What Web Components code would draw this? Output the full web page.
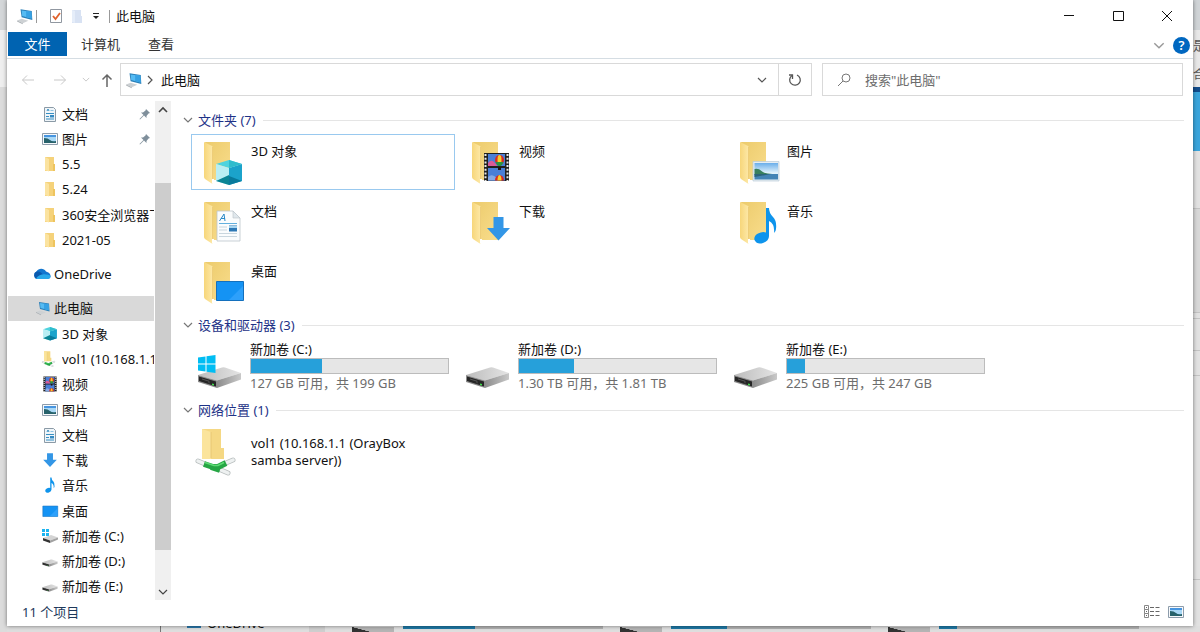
<!DOCTYPE html>
<html lang="zh-CN">
<head>
<meta charset="utf-8">
<meta name="viewport" content="width=device-width, initial-scale=1">
<title>此电脑</title>
<style>
  html, body { margin: 0; height: 100%; }
  body {
    font: 13px/18px "Noto Sans", "Noto Sans CJK SC", sans-serif;
    color: #111;
    --line: #d9d9d9;
    --accent: #0063b1;
    --fill: #26a0da;
    --group: #1e3287;
  }
</style>
</head>
<body>
<desktop-area>
  <back-windows slot="behind"></back-windows>
  <explorer-window>
    <window-caption slot="caption">此电脑</window-caption>
    <ribbon-tabs slot="ribbon"></ribbon-tabs>
    <address-bar slot="address" place="此电脑"></address-bar>
    <nav-pane slot="nav">
      <nav-item icon="doc" pinned>文档</nav-item>
      <nav-item icon="picture" pinned>图片</nav-item>
      <nav-item icon="folder">5.5</nav-item>
      <nav-item icon="folder">5.24</nav-item>
      <nav-item icon="folder">360安全浏览器下载</nav-item>
      <nav-item icon="folder">2021-05</nav-item>
      <nav-item icon="cloud" root>OneDrive</nav-item>
      <nav-item icon="pc" root selected>此电脑</nav-item>
      <nav-item icon="cube">3D 对象</nav-item>
      <nav-item icon="net">vol1 (10.168.1.1 (OrayBox samba server))</nav-item>
      <nav-item icon="video">视频</nav-item>
      <nav-item icon="picture">图片</nav-item>
      <nav-item icon="doc">文档</nav-item>
      <nav-item icon="download">下载</nav-item>
      <nav-item icon="music">音乐</nav-item>
      <nav-item icon="desktop">桌面</nav-item>
      <nav-item icon="driveC">新加卷 (C:)</nav-item>
      <nav-item icon="drive">新加卷 (D:)</nav-item>
      <nav-item icon="drive">新加卷 (E:)</nav-item>
    </nav-pane>
    <file-group label="文件夹 (7)">
      <file-tile icon="bigCube" focused>3D 对象</file-tile>
      <file-tile icon="bigVideo">视频</file-tile>
      <file-tile icon="bigPicture">图片</file-tile>
      <file-tile icon="bigDoc">文档</file-tile>
      <file-tile icon="bigDownload">下载</file-tile>
      <file-tile icon="bigMusic">音乐</file-tile>
      <file-tile icon="bigDesktop">桌面</file-tile>
    </file-group>
    <file-group label="设备和驱动器 (3)">
      <drive-tile icon="bigDriveC" used="36" info="127 GB 可用，共 199 GB">新加卷 (C:)</drive-tile>
      <drive-tile icon="bigDrive" used="28" info="1.30 TB 可用，共 1.81 TB">新加卷 (D:)</drive-tile>
      <drive-tile icon="bigDrive" used="9" info="225 GB 可用，共 247 GB">新加卷 (E:)</drive-tile>
    </file-group>
    <file-group label="网络位置 (1)">
      <file-tile icon="bigNet" centered>vol1 (10.168.1.1 (OrayBox samba server))</file-tile>
    </file-group>
    <status-bar slot="status">11 个项目</status-bar>
  </explorer-window>
</desktop-area>

<script>
const folderShape = `
  <defs>
    <linearGradient id="back" x1="0" x2="1" y2="1"><stop offset="0" stop-color="#eccb6c"/><stop offset="1" stop-color="#f9dd8c"/></linearGradient>
    <linearGradient id="flap" x2="1"><stop offset="0" stop-color="#f7d67a"/><stop offset="1" stop-color="#fde9a9"/></linearGradient>
  </defs>
  <path d="M6 4H31V42H12z" fill="url(#back)"/>
  <path d="M5 4L13 8Q14 9 14 10V45Q14 46 12 45L6 41Q5 40 5 39z" fill="url(#flap)"/>
  <path d="M13.500 9V42" stroke="#e6c266" stroke-width=".7"/>
  <path d="M13 41l2 0v3l-2 2z" fill="#fff"/>`;

const driveShape = `
  <defs>
    <linearGradient id="top" x2="1"><stop offset="0" stop-color="#bcbcbc"/><stop offset="1" stop-color="#e4e4e4"/></linearGradient>
    <linearGradient id="side" x2="1"><stop offset="0" stop-color="#8c8c8c"/><stop offset="1" stop-color="#c9c9c9"/></linearGradient>
  </defs>
  <path d="M0 33L24 25.500Q25 25 27 25.500L43 31L19 38.500z" fill="url(#top)"/>
  <path d="M19 38.500L43 31V37.500L19 46z" fill="url(#side)"/>
  <path d="M0 33L19 38.500V46L0 40z" fill="#8b8b8b"/>
  <path d="M1 34.500L18 39.500V44.500L1 39z" fill="#262626"/>
  <path d="M4 37l7 2.200v2.200" stroke="#555" fill="none"/>
  <path d="M14 41.500l2 .6v1.500l-2-.6z" fill="#3fe04b"/>`;

const cubeShape = `
  <path d="M17 26L30 22L43 26L30 30z" fill="#4fd3de"/>
  <path d="M17 26L30 30V47L17 43z" fill="#b9eef3"/>
  <path d="M43 26L30 30V47L43 43z" fill="#1ba3cb"/>
  <path d="M30 22l13 4-13 4z" fill="#2fbccd"/>
  <path d="M17 43L30 37V47z" fill="#0a8595"/>
  <path d="M30 38L43 43 30 47z" fill="#087a9c"/>`;

const videoShape = `
  <path d="M17 15H42V43H17z" fill="#20201f"/>
  <path d="M18.500 16v27M40.500 16v27" stroke="#e8e8e8" stroke-width="2" stroke-dasharray="2 1.700"/>
  <path d="M21 16H38V28H21zM21 30H38V42.500H21z" fill="#4a7fd6"/>
  <path d="M21 25q3-4 6-1t3 4h-9z" fill="#d95a98"/>
  <path d="M21 39q3-3 6-1t4 2v2.500H21z" fill="#86a9e4"/>
  <ellipse cx="32.500" cy="22" rx="4.500" ry="5" fill="#d92b20"/>
  <ellipse cx="32.500" cy="22" rx="2" ry="5" fill="#f6cf2c"/>
  <path d="M28.500 24h8q-1 3-3 4h-2q-2-1-3-4z" fill="#2b9440"/>
  <path d="M31 29h3v3h-3z" fill="#20160f"/>
  <path d="M28 42.500a4.500 5.500 0 0 1 9 0z" fill="#d92b20"/>
  <path d="M30.500 42.500q0-5 2-5.500 2 .5 2 5.500z" fill="#f6cf2c"/>`;

const pictureShape = `
  <defs><linearGradient id="sky" x2="0" y2="1"><stop offset="0" stop-color="#6aaeea"/><stop offset=".6" stop-color="#e2f2fb"/></linearGradient></defs>
  <path d="M18 23.500H44V43H18z" fill="#e6edf2" stroke="#b9cbd8" stroke-width=".7"/>
  <path d="M19.500 25H43V41.500H19.500z" fill="url(#sky)"/>
  <path d="M19.500 31q4-1 7 2t16.500 3v1H19.500z" fill="#39805e"/>
  <path d="M19.500 36H43V41.500H19.500z" fill="#4484b5"/>
  <path d="M19.500 36H36l-16.500 3z" fill="#2c6478"/>`;

const docShape = `
  <path d="M18 13H34L41 20V43H18z" fill="#fafcfd" stroke="#bcc5cb" stroke-width=".8"/>
  <path d="M34 13V20H41z" fill="#dfe7ec" stroke="#bcc5cb" stroke-width=".6"/>
  <path d="M20.500 23l4.500-7 1 7M22 20.500h4" stroke="#2989c8" fill="none"/>
  <path d="M20 25.500H38" stroke="#62b0de"/>
  <path d="M30 27.500h8v6h-8z" fill="#2d78b5"/><path d="M30 28h8v2h-8z" fill="#a5d5f1"/>
  <path d="M20 29h8M20 32h8M20 35.500h18M20 38.500h18" stroke="#c9d6de"/>`;

const arrowShape = `<path d="M26.500 19H36.500V30H43L31.500 42.500L20 30H26.500z" fill="#3396e6"/>`;
const noteShape = `<path d="M31 10h3q0 5 4 9t3 12q0 2-2 4 1-9-5-12V38q0 5-6 7t-8.500-3q-1-4 3.500-6.500t8-1z" fill="#0e94ec"/>`;
const screenShape = `
  <path d="M17.500 23.500H44.500V42.500H17.500z" fill="#1493f4" stroke="#1470bd"/>
  <path d="M30 42L44 28V42z" fill="#2da0fb"/>`;
const logoShape = `<path d="M0 15.500L7.500 14.500V21.500H0zM8.500 14.300L17.500 13V21.500H8.500zM0 22.500H7.500V29.500L0 28.500zM8.500 22.500H17.500V31L8.500 29.700z" fill="#00bdf3"/>`;

const netShape = `
  <path d="M3 1H22V20H25V31H3z" fill="#f5d884"/>
  <path d="M3 1L12 4V31H3z" fill="#fbe49c"/>
  <path d="M12 4V30" stroke="#e2c06a" stroke-width=".7"/>
  <path d="M-1 33l7 3M34 32l-7 3M22 42l7 3" stroke="#b9bfbf" stroke-width="5" stroke-linecap="round"/>
  <path d="M-1 33l7 3M34 32l-7 3M22 42l7 3" stroke="#eef1f1" stroke-width="3.500" stroke-linecap="round"/>
  <path d="M5 36l9 3h5l8-4M12 39l9 3" stroke="#26a644" stroke-width="6" fill="none" stroke-linejoin="round"/>
  <path d="M6 34.500l9 3h4l6-3" stroke="#5fdb74" stroke-width="1.500" fill="none"/>`;

// [viewBox, markup]
const ICONS = {
  bigCube: ['0 0 48 48', folderShape + cubeShape],
  bigVideo: ['0 0 48 48', folderShape + videoShape],
  bigPicture: ['0 0 48 48', folderShape + pictureShape],
  bigDoc: ['0 0 48 48', folderShape + docShape],
  bigDownload: ['0 0 48 48', folderShape + arrowShape],
  bigMusic: ['0 0 48 48', folderShape + noteShape],
  bigDesktop: ['0 0 48 48', folderShape + screenShape],
  bigDrive: ['0 0 48 48', driveShape],
  bigDriveC: ['0 0 48 48', driveShape + logoShape],
  bigNet: ['0 0 48 48', netShape],
  cube: ['15 20 30 30', cubeShape],
  video: ['15 14 29 30', videoShape],
  desktop: ['16 18 29 29', screenShape],
  download: ['18 17 27 27', arrowShape],
  music: ['12 9 37 37', noteShape],
  drive: ['-1 7 45 45', driveShape],
  net: ['-3 0 48 48', netShape],
  driveC: ['0 0 16 16', `
    <path d="M0 1h3v3H0zM4 1h3v3H4zM0 5h3v3H0zM4 5h3v3H4z" fill="#1cb4f0"/>
    <path d="M1 10l8-3 7 2.500-8 3z" fill="#d4d4d4"/><path d="M8 12.500l8-3v2L8 15z" fill="#a2a2a2"/>
    <path d="M1 10l7 2.500V15l-7-2.500z" fill="#333"/>`],
  folder: ['0 0 16 16', `
    <path d="M3 1h9v8h1v6H3z" fill="#f5d27a"/><path d="M3 1l4 2v12.500L3 14z" fill="#fbe3a0"/>
    <path d="M11 8h2v7h-2z" fill="#eec45e"/>`],
  picture: ['0 0 16 16', `
    <path d="M.5 2.500h15v11H.5z" fill="#f7f9fb" stroke="#8d9cab"/>
    <path d="M2 4h12v8H2z" fill="#a9d8f6"/><path d="M2 4h12v2H2z" fill="#4795e0"/>
    <path d="M2 7q4 0 6 2t6 1v2H2z" fill="#27626b"/>`],
  doc: ['0 0 16 16', `
    <path d="M2.500 1.500h9l2 2v12h-11z" fill="#eff5f9" stroke="#8b9aa6"/>
    <path d="M5 5l1-2 1 2M4 7.500h8M4 10.500h3M4 13h8" stroke="#368fc3" fill="none"/>
    <path d="M8 9h4v2.500H8z" fill="#348ac2"/><path d="M8.500 4.500h3" stroke="#8fc4e2"/>`],
  cloud: ['0 0 18 12', `
    <path d="M4 11a4 4 0 0 1-.5-7.500A5.500 5.500 0 0 1 13 3.500q4 1 4.500 4t-3 3.500z" fill="#1276cf"/>
    <path d="M4 11a4 4 0 0 1-.5-7.500Q6 3 8 4.500l6 6.500z" fill="#0a59ae"/>
    <path d="M3 10.500q4-5 10-4 5 0 4.500 2.500-.5 2-3 2H4z" fill="#28a8ea"/>`],
  pc: ['0 0 16 16', `
    <path d="M4 2l10 1.500.5 8L5 9z" fill="#2a7fb8"/><path d="M5 3l8.500 1.300.3 6L5.500 8z" fill="#55bbf3"/>
    <path d="M9 3.600l4.500.7.3 6-4.800-1.400z" fill="#36a1e4"/>
    <path d="M1 12l4-1.500 6 1.800L6 14.500z" fill="#cdd1d4"/><path d="M1 12l5 2.500v.8l-5-2.500z" fill="#a7adb1"/>`],
  pin: ['0 0 12 12', `<path d="M7 1l4 4-1.500.5L7.500 8v2L5 7.500 1 11.500.5 11l4-4L2 4.500h2L6.500 2.500z" fill="#7f8f9b"/>`],
  check: ['0 0 14 16', `
    <path d="M1.500 1.500h11v13h-11z" fill="#fff" stroke="#9097a0"/><path d="M4 8l2.500 3L11 5" fill="none" stroke="#e0622c" stroke-width="1.800"/>`],
  newFolder: ['0 0 12 16', `<path d="M1 2h9v6h1v7H1z" fill="#d8e2f3"/><path d="M1 2l3 1v12l-3-1z" fill="#e5edf9"/>`],
  menu: ['0 0 8 8', `<path d="M1 1.500h6" stroke="#222"/><path d="M1 4h6L4 7z" fill="#222"/>`],
  minimize: ['0 0 12 12', `<path d="M1 5.500h10" stroke="#111"/>`],
  maximize: ['0 0 12 12', `<path d="M1.500 1.500h10v9h-10z" fill="none" stroke="#111"/>`],
  close: ['0 0 12 12', `<path d="M1 1l10 10M11 1L1 11" stroke="#111"/>`],
  back: ['0 0 14 12', `<path d="M13 6H1.500M6 1.500L1.500 6 6 10.500" fill="none" stroke="currentColor"/>`],
  forward: ['0 0 14 12', `<path d="M1 6h11.500M8 1.500L12.500 6 8 10.500" fill="none" stroke="currentColor"/>`],
  up: ['0 0 12 14', `<path d="M6 14V2M1.500 6.500L6 2l4.500 4.500" fill="none" stroke="#666" stroke-width="1.500"/>`],
  down: ['0 0 10 6', `<path d="M1 1l4 4 4-4" fill="none" stroke="currentColor" stroke-width="1.200"/>`],
  upSmall: ['0 0 10 6', `<path d="M1 5l4-4 4 4" fill="none" stroke="currentColor" stroke-width="1.600"/>`],
  right: ['0 0 6 10', `<path d="M1 1l4 4-4 4" fill="none" stroke="#555" stroke-width="1.200"/>`],
  refresh: ['0 0 14 14', `<path d="M4 2.500A5.300 5.300 0 1 0 9 2" fill="none" stroke="#555" stroke-width="1.300"/><path d="M4.500 6V2H1" fill="none" stroke="#555" stroke-width="1.300"/>`],
  search: ['0 0 14 14', `<circle cx="9" cy="5" r="4" fill="none" stroke="#777"/><path d="M6 8L1 13" stroke="#777"/>`],
  details: ['0 0 16 14', `
    <path d="M.5.5h4v4h-4zM.5 4.500h4v4h-4zM.5 8.500h4v4h-4z" fill="#fff" stroke="#888"/>
    <path d="M2 2.500h1M2 6.500h1M2 10.500h1M6 2.500h4M11.500 2.500h4M6 6.500h4M11.500 6.500h4M6 10.500h4M11.500 10.500h4" stroke="#666"/>`]
};

class UiIcon extends HTMLElement {
  connectedCallback() {
    const [box, body] = ICONS[this.getAttribute('name')];
    const w = this.getAttribute('w') || 16;
    const h = this.getAttribute('h') || w;
    this.attachShadow({ mode: 'open' });
    this.shadowRoot.innerHTML = `
      <style>
        :host { display: block; flex: none; }
        svg { display: block; overflow: visible; }
      </style>
      <svg width="${w}" height="${h}" viewBox="${box}" fill="none" aria-hidden="true">${body}</svg>
    `;
  }
}

class DesktopArea extends HTMLElement {
  connectedCallback() {
    this.attachShadow({ mode: 'open' });
    this.shadowRoot.innerHTML = `
      <style>
        :host {
          display: flex;
          position: relative;
          box-sizing: border-box;
          min-height: 100vh;
          padding: 0 7px 6px;
          background: #dedede;
          overflow: hidden;
        }
        ::slotted(explorer-window) { flex: 1; min-width: 0; }
      </style>
      <slot name="behind"></slot>
      <slot></slot>
    `;
  }
}

class BackWindows extends HTMLElement {
  connectedCallback() {
    this.attachShadow({ mode: 'open' });
    this.shadowRoot.innerHTML = `
      <style>
        :host { position: absolute; inset: 0; overflow: hidden; }
        .left, .right { position: absolute; top: 0; bottom: 0; width: 7px; }
        .left {
          left: 0;
          background: linear-gradient(#d4d7d9 30px, #efefef 30px 87px, #dcdcdc 87px);
        }
        .right {
          right: 0;
          overflow: hidden;
          color: #555;
          background: linear-gradient(#d0d4d7 30px, #e8e8e8 30px 87px, #134d8c 87px 92px,
            #3aa5dc 92px 151px, #e2e2e2 151px 208px, #c4c4c4 208px 209px, #d8d8d8 209px 312px,
            #c4c4c4 312px 313px, #e2e2e2 313px 318px, #c4c4c4 318px 319px, #e2e2e2 319px 350px,
            #c4c4c4 350px 351px, #e2e2e2 351px 375px, #c4c4c4 375px 376px, #e2e2e2 376px 579px,
            #c4c4c4 579px 580px, #e2e2e2 580px);
        }
        .right span { display: block; margin-top: 36px; }
        .right span + span { margin-top: 12px; font-size: 12px; }
        .bottom {
          position: absolute;
          left: 160px;
          right: 0;
          bottom: 0;
          height: 6px;
          display: flex;
          align-items: flex-end;
          overflow: hidden;
          background: #dfdfdf;
          border-left: 1px solid #777;
        }
        .cloud { align-self: flex-start; width: 14px; height: 2px; margin: 0 6px 0 26px; background: #2a78ab; }
        .name { width: 102px; }
        .scroll { width: 16px; height: 6px; background: #cfcfcf; }
        .drive { width: 42px; height: 5px; margin-left: 17px; background: linear-gradient(15deg, #333 30%, #b5b5b5 32%); }
        .scroll + .drive { margin-left: 27px; }
        .drive + .bar { margin-left: 9px; }
        .bar { align-self: flex-start; width: 200px; height: 3px; background: #b2b2b2; }
        .bar i { display: block; height: 3px; background: #1e79a6; }
      </style>
      <div class="left"></div>
      <div class="right"><span>是</span><span>合</span></div>
      <div class="bottom">
        <div class="cloud"></div><span class="name">OneDrive</span><div class="scroll"></div>
        <div class="drive"></div><div class="bar"><i style="width:36%"></i></div>
        <div class="drive"></div><div class="bar"><i style="width:28%"></i></div>
        <div class="drive"></div><div class="bar"><i style="width:9%"></i></div>
      </div>
    `;
  }
}

class ExplorerWindow extends HTMLElement {
  connectedCallback() {
    this.attachShadow({ mode: 'open' });
    this.shadowRoot.innerHTML = `
      <style>
        :host {
          display: flex;
          flex-direction: column;
          position: relative;
          background: #fff;
          box-shadow: 0 0 4px rgba(0, 0, 0, 0.5);
        }
        .body { flex: 1; display: flex; min-height: 0; }
        main { flex: 1; min-width: 0; padding: 8px 9px 0 12px; }
      </style>
      <slot name="caption"></slot>
      <slot name="ribbon"></slot>
      <slot name="address"></slot>
      <div class="body">
        <slot name="nav"></slot>
        <main><slot></slot></main>
      </div>
      <slot name="status"></slot>
    `;
  }
}

class WindowCaption extends HTMLElement {
  connectedCallback() {
    this.attachShadow({ mode: 'open' });
    this.shadowRoot.innerHTML = `
      <style>
        :host { display: flex; align-items: center; height: 32px; padding: 0 2px 0 9px; }
        button { display: flex; align-items: center; justify-content: center; border: 0; padding: 0; background: none; }
        .bar { width: 1px; height: 13px; background: #999; }
        .quick { display: flex; align-items: center; gap: 8px; margin: 0 8px 0 12px; }
        .quick button:last-child { width: 10px; }
        .title { flex: 1; margin-left: 6px; }
        .controls { display: flex; height: 100%; }
        .controls button { width: 49px; }
      </style>
      <ui-icon name="pc" w="18"></ui-icon>
      <div class="bar" style="margin-left:2px"></div>
      <div class="quick">
        <button aria-label="属性"><ui-icon name="check" w="14" h="16"></ui-icon></button>
        <button aria-label="新建文件夹"><ui-icon name="newFolder" w="12" h="16"></ui-icon></button>
        <button aria-label="自定义快速访问工具栏"><ui-icon name="menu" w="8"></ui-icon></button>
      </div>
      <div class="bar"></div>
      <span class="title"><slot></slot></span>
      <div class="controls">
        <button aria-label="最小化"><ui-icon name="minimize" w="12"></ui-icon></button>
        <button aria-label="最大化"><ui-icon name="maximize" w="12"></ui-icon></button>
        <button aria-label="关闭"><ui-icon name="close" w="12"></ui-icon></button>
      </div>
    `;
  }
}

class RibbonTabs extends HTMLElement {
  connectedCallback() {
    this.attachShadow({ mode: 'open' });
    this.shadowRoot.innerHTML = `
      <style>
        :host { display: flex; height: 26px; padding: 0 3px 0 1px; border-bottom: 1px solid #d5dde3; }
        button { border: 0; padding: 0; background: none; font: inherit; color: #333; }
        .tab { height: 24px; padding: 0 14px; }
        .file { width: 59px; height: 24px; background: var(--accent); color: #fff; }
        .space { flex: 1; }
        .more { width: 20px; color: #999; display: flex; align-items: center; justify-content: center; }
        .help {
          align-self: center;
          width: 17px;
          height: 17px;
          margin-left: 4px;
          border-radius: 50%;
          background: #0067c0;
          color: #fff;
          font-weight: 600;
          line-height: 17px;
        }
      </style>
      <button class="file">文件</button>
      <button class="tab">计算机</button>
      <button class="tab">查看</button>
      <div class="space"></div>
      <button class="more" aria-label="展开功能区"><ui-icon name="down" w="12" h="7"></ui-icon></button>
      <button class="help" aria-label="帮助">?</button>
    `;
  }
}

class AddressBar extends HTMLElement {
  connectedCallback() {
    const place = this.getAttribute('place');
    this.attachShadow({ mode: 'open' });
    this.shadowRoot.innerHTML = `
      <style>
        :host { display: flex; align-items: center; padding: 4px 10px 5px 13px; }
        button { display: flex; align-items: center; justify-content: center; border: 0; padding: 0; background: none; font: inherit; color: inherit; }
        .nav { display: flex; align-items: center; width: 100px; color: #c8c8c8; }
        .nav button { flex: none; height: 32px; }
        .back { width: 16px; }
        .forward { width: 48px; }
        .recent { width: 4px; }
        .up { width: 26px; margin-left: auto; }
        .path, .search { box-sizing: border-box; display: flex; align-items: center; height: 33px; border: 1px solid var(--line); }
        .path { flex: 1; padding-left: 4px; color: #111; }
        .path > .crumb { margin-left: 8px; }
        .path > ui-icon + ui-icon { margin-left: 4px; }
        .drop { width: 32px; height: 31px; margin-left: auto; color: #555; }
        .refresh { width: 33px; height: 31px; border-left: 1px solid var(--line); }
        .search { flex: 0 1 361px; margin-left: 10px; padding-left: 14px; }
        input { flex: 1; min-width: 0; margin-left: 14px; padding: 0; border: 0; outline: 0; background: none; font: inherit; }
        input::placeholder { color: #6d6d6d; opacity: 1; }
      </style>
      <div class="nav">
        <button class="back" aria-label="后退"><ui-icon name="back" w="14" h="12"></ui-icon></button>
        <button class="forward" aria-label="前进"><ui-icon name="forward" w="14" h="12"></ui-icon></button>
        <button class="recent" aria-label="最近浏览的位置"><ui-icon name="down" w="8" h="5"></ui-icon></button>
        <button class="up" aria-label="上移"><ui-icon name="up" w="12" h="14"></ui-icon></button>
      </div>
      <div class="path">
        <ui-icon name="pc" w="18"></ui-icon>
        <ui-icon name="right" w="6" h="10"></ui-icon>
        <button class="crumb">${place}</button>
        <button class="drop" aria-label="以前的位置"><ui-icon name="down" w="10" h="6"></ui-icon></button>
        <button class="refresh" aria-label="刷新"><ui-icon name="refresh" w="14"></ui-icon></button>
      </div>
      <label class="search">
        <ui-icon name="search" w="14"></ui-icon>
        <input type="text" placeholder='搜索"${place}"' aria-label="搜索">
      </label>
    `;
  }
}

class NavPane extends HTMLElement {
  connectedCallback() {
    this.attachShadow({ mode: 'open' });
    this.shadowRoot.innerHTML = `
      <style>
        :host { display: flex; flex: none; width: 164px; }
        nav { flex: 1; min-width: 0; display: flex; flex-direction: column; padding: 0 1px 1px; }
        .scroll { width: 16px; display: flex; flex-direction: column; background: #f0f0f0; }
        .scroll button { height: 17px; border: 0; padding: 0; background: none; color: #444; display: flex; align-items: center; justify-content: center; }
        .track { flex: 1; display: flex; flex-direction: column; }
        .thumb { flex: 367; background: #cdcdcd; }
      </style>
      <nav><slot></slot></nav>
      <div class="scroll">
        <button aria-label="向上滚动"><ui-icon name="upSmall" w="10" h="6"></ui-icon></button>
        <div class="track">
          <div style="flex:65"></div><div class="thumb"></div><div style="flex:33"></div>
        </div>
        <button aria-label="向下滚动"><ui-icon name="down" w="10" h="6"></ui-icon></button>
      </div>
    `;
  }
}

class NavItem extends HTMLElement {
  connectedCallback() {
    const icon = this.getAttribute('icon');
    const size = icon === 'cloud' ? 'w="18" h="12"' : 'w="16"';
    this.attachShadow({ mode: 'open' });
    this.shadowRoot.innerHTML = `
      <style>
        :host { display: flex; flex: 1; min-height: 0; }
        :host([root]) { margin-top: 9px; }
        a {
          flex: 1;
          min-width: 0;
          display: flex;
          align-items: center;
          gap: 4px;
          padding-left: 34px;
          color: inherit;
          text-decoration: none;
        }
        :host([root]) a { padding-left: 25px; gap: 3px; }
        :host([selected]) a { background: #d9d9d9; padding-left: 27px; }
        span { flex: 1; overflow: hidden; white-space: nowrap; }
        .pin { margin-right: 3px; }
      </style>
      <a href="#">
        <ui-icon name="${icon}" ${size}></ui-icon>
        <span><slot></slot></span>
        ${this.hasAttribute('pinned') ? '<ui-icon class="pin" name="pin" w="12"></ui-icon>' : ''}
      </a>
    `;
  }
}

class FileGroup extends HTMLElement {
  connectedCallback() {
    this.attachShadow({ mode: 'open' });
    this.shadowRoot.innerHTML = `
      <style>
        :host { display: block; margin-bottom: 4px; }
        header { display: flex; align-items: center; height: 22px; margin-bottom: 3px; }
        button { display: flex; align-items: center; gap: 5px; border: 0; padding: 0; background: none; font: inherit; color: #777; }
        h2 { margin: 0; font: inherit; color: var(--group); }
        hr { flex: 1; margin: 0 0 0 7px; border: 0; border-top: 1px solid #e5e5e5; }
        .items {
          display: grid;
          grid-template-columns: repeat(auto-fill, 264px);
          gap: 4px;
          padding-left: 8px;
        }
      </style>
      <header>
        <button><ui-icon name="down" w="10" h="6"></ui-icon><h2>${this.getAttribute('label')}</h2></button>
        <hr>
      </header>
      <div class="items"><slot></slot></div>
    `;
  }
}

class FileTile extends HTMLElement {
  connectedCallback() {
    this.attachShadow({ mode: 'open' });
    this.shadowRoot.innerHTML = `
      <style>
        :host {
          box-sizing: border-box;
          display: flex;
          gap: 4px;
          height: 56px;
          padding: 3px 7px;
          border: 1px solid transparent;
        }
        :host([focused]) { border-color: #99c9ef; }
        span { margin-top: 4px; max-width: 180px; }
        :host([centered]) span { align-self: center; margin: 0; line-height: 17px; }
      </style>
      <ui-icon name="${this.getAttribute('icon')}" w="48"></ui-icon>
      <span><slot></slot></span>
    `;
  }
}

class DriveTile extends HTMLElement {
  connectedCallback() {
    const used = this.getAttribute('used');
    this.attachShadow({ mode: 'open' });
    this.shadowRoot.innerHTML = `
      <style>
        :host { box-sizing: border-box; display: flex; align-items: center; gap: 4px; height: 56px; padding: 0 6px 2px 7px; }
        .text { flex: 1; }
        .bar { box-sizing: border-box; height: 16px; border: 1px solid #bcbcbc; background: #e6e6e6; }
        .bar div { height: 100%; background: var(--fill); }
        .info { color: #6d6d6d; }
      </style>
      <ui-icon name="${this.getAttribute('icon')}" w="48"></ui-icon>
      <div class="text">
        <div><slot></slot></div>
        <div class="bar" role="meter" aria-valuenow="${used}" aria-valuemin="0" aria-valuemax="100"><div style="width:${used}%"></div></div>
        <div class="info">${this.getAttribute('info')}</div>
      </div>
    `;
  }
}

class StatusBar extends HTMLElement {
  connectedCallback() {
    this.attachShadow({ mode: 'open' });
    this.shadowRoot.innerHTML = `
      <style>
        :host { box-sizing: border-box; display: flex; align-items: center; gap: 8px; height: 26px; padding: 0 9px 2px 15px; color: #1e395b; }
        span { flex: 1; }
        button { border: 0; padding: 0; background: none; }
      </style>
      <span><slot></slot></span>
      <button aria-label="详细信息"><ui-icon name="details" w="16" h="14"></ui-icon></button>
      <button aria-label="大图标"><ui-icon name="picture" w="16"></ui-icon></button>
    `;
  }
}

customElements.define('ui-icon', UiIcon);
customElements.define('desktop-area', DesktopArea);
customElements.define('back-windows', BackWindows);
customElements.define('explorer-window', ExplorerWindow);
customElements.define('window-caption', WindowCaption);
customElements.define('ribbon-tabs', RibbonTabs);
customElements.define('address-bar', AddressBar);
customElements.define('nav-pane', NavPane);
customElements.define('nav-item', NavItem);
customElements.define('file-group', FileGroup);
customElements.define('file-tile', FileTile);
customElements.define('drive-tile', DriveTile);
customElements.define('status-bar', StatusBar);
</script>
</body>
</html>
